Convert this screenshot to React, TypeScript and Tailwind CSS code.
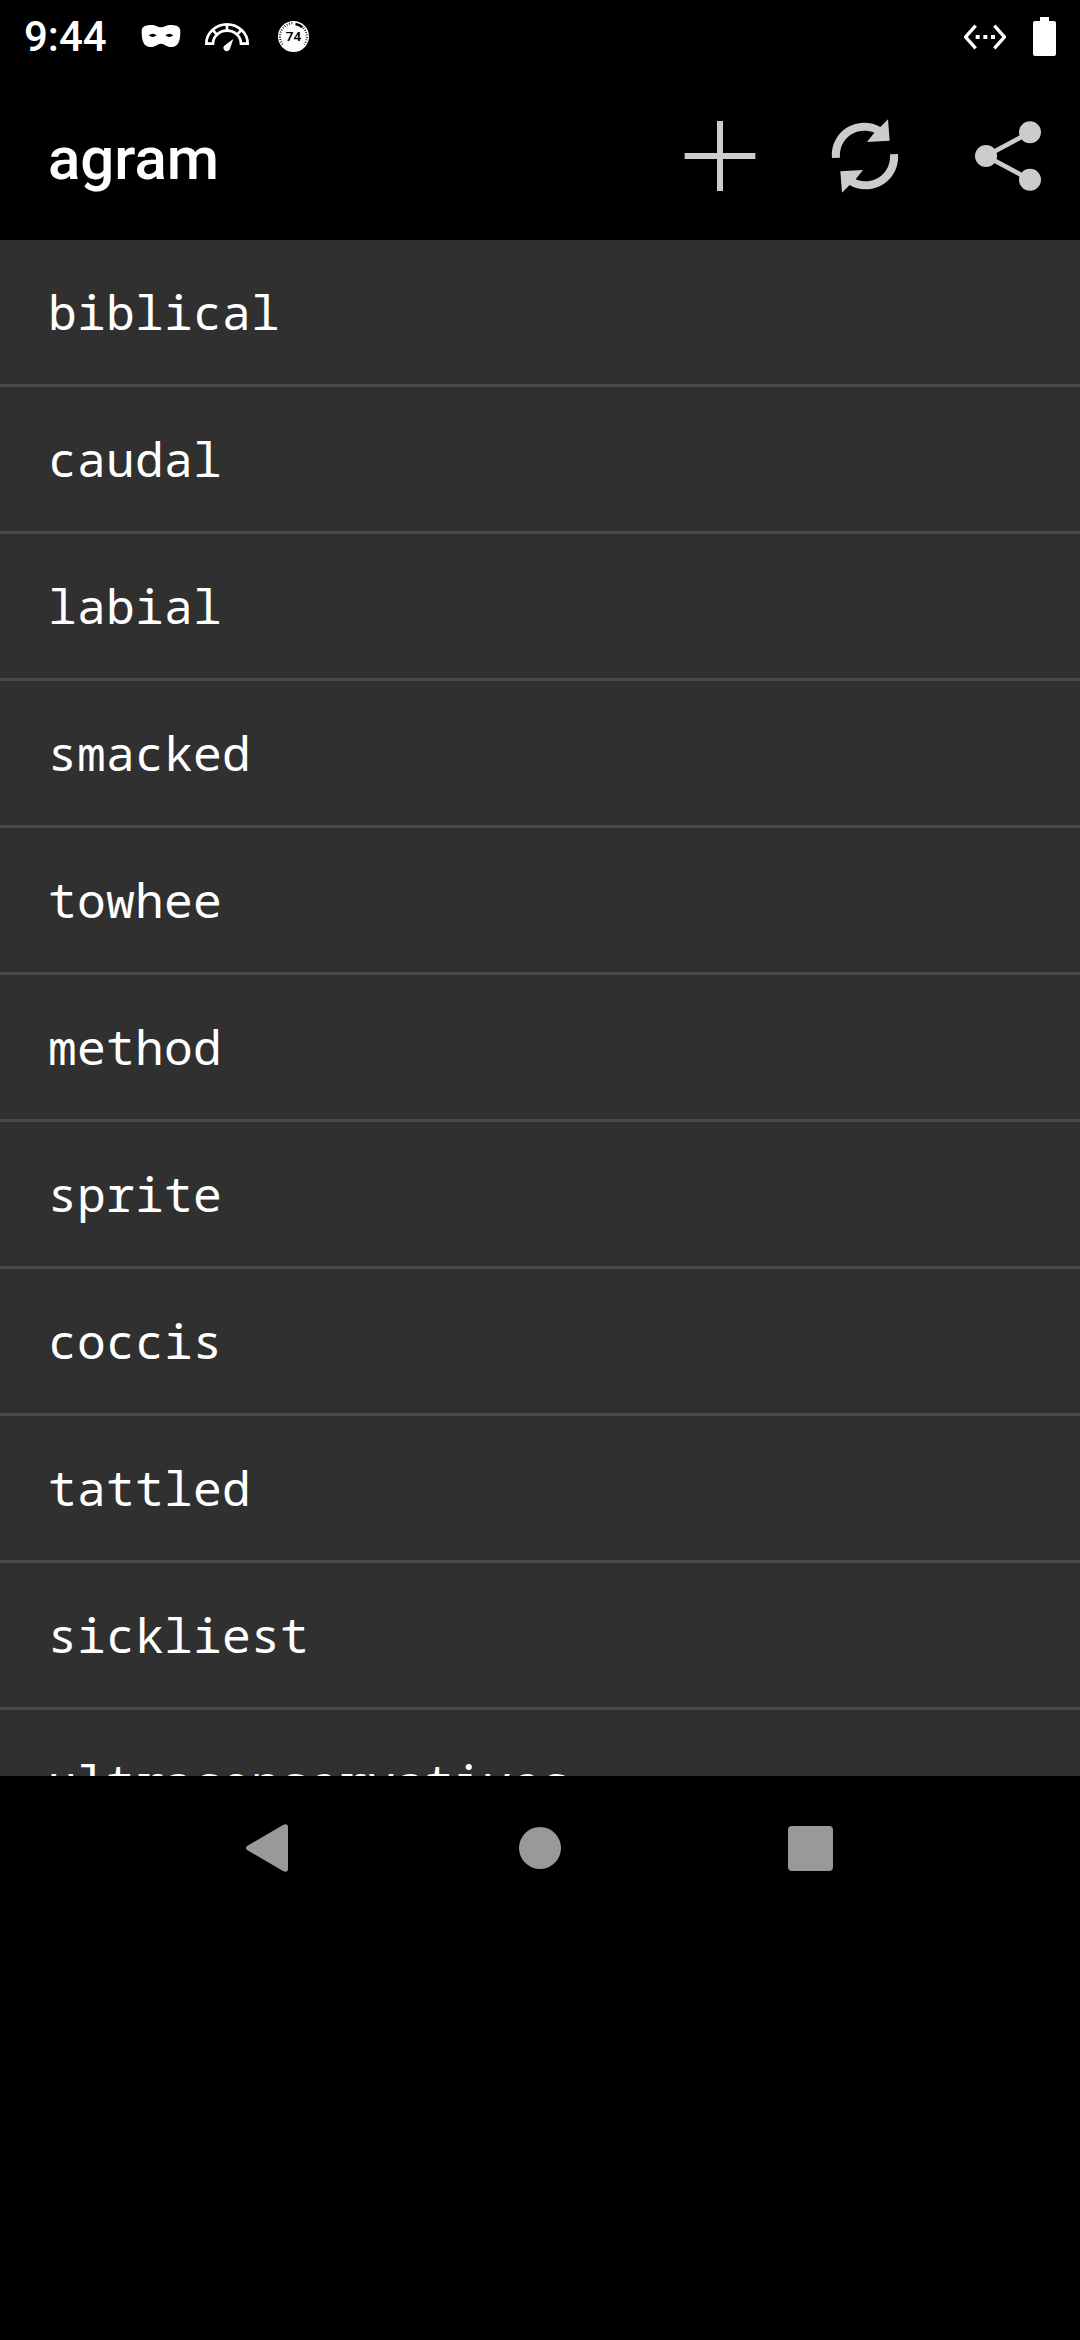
const words = [
  "biblical",
  "caudal",
  "labial",
  "smacked",
  "towhee",
  "method",
  "sprite",
  "coccis",
  "tattled",
  "sickliest",
  "ultraconservatives",
];

function Mask() {
  return (
    <svg className="ml-[32px] h-[24px] w-[42px]" viewBox="0 0 126 72" fill="#fff">
      <path
        fillRule="evenodd"
        d="M34 3C48 3 53 10 63 10S78 3 92 3C112 3 121 9 121 22C121 50 116 69 94 69C78 69 74 59 63 59S48 69 32 69C10 69 5 50 5 22C5 9 14 3 34 3ZM26 34Q38 44 50 34Q38 24 26 34ZM76 34Q88 44 100 34Q88 24 76 34Z"
      />
    </svg>
  );
}

function Gauge() {
  return (
    <svg className="mt-[2px] ml-[22px] h-[30px] w-[46px]" viewBox="0 0 138 90" fill="none" stroke="#fff" strokeWidth="8">
      <path d="M7 65A62 58 0 0 1 131 65H111A42 39 0 0 0 27 65Z" />
      <path d="M69 6V29M26 24L41 40M112 24L97 40" strokeWidth="8" />
      <path d="M88 51L78 80A10 10 0 1 1 60 72Z" fill="#fff" stroke="none" />
    </svg>
  );
}

function Dial() {
  return (
    <svg className="mt-px ml-[28px] h-[31px] w-[31px]" viewBox="0 0 94 94">
      <circle cx="47" cy="47" r="47" fill="#fff" />
      <path d="M14 71A40 40 0 0 1 47 7" fill="none" stroke="#000" strokeWidth="6" strokeDasharray="2.5 5" />
      <path d="M77 21A40 40 0 0 1 80 71" fill="none" stroke="#000" strokeWidth="6" strokeDasharray="2.5 5" />
      <path d="M53 9A38 38 0 0 1 74 19" fill="none" stroke="#000" strokeWidth="8" />
      <text x="47" y="62" textAnchor="middle" fontSize="41" fontWeight="600" fontFamily="Roboto, sans-serif" fill="#000">
        74
      </text>
    </svg>
  );
}

export default function App() {
  return (
    <div className="flex h-[2340px] w-[1080px] flex-col overflow-hidden bg-black font-[Roboto,sans-serif] text-white">
      <header className="flex h-[72px] shrink-0 items-center justify-between pr-[24px] pl-6">
        <div className="flex items-center">
          <span className="w-[84px] pt-[2px] text-[42px] leading-[74px] font-medium">9:44</span>
          <Mask />
          <Gauge />
          <Dial />
        </div>
        <div className="flex items-center">
          <svg className="mt-px h-[26px] w-[42px]" viewBox="0 0 126 78" fill="none" stroke="#fff" strokeWidth="10">
            <path d="M35 5L5 39L35 73M91 5L121 39L91 73" />
            <path d="M35 39H93" strokeWidth="12" strokeDasharray="12 11" />
          </svg>
          <svg className="ml-[27px] h-[39px] w-[23px]" viewBox="0 0 69 117" fill="#fff">
            <path d="M21 0H48V12H63Q69 12 69 18V111Q69 117 63 117H6Q0 117 0 111V18Q0 12 6 12H21Z" />
          </svg>
        </div>
      </header>
      <div className="flex h-[168px] shrink-0 items-center justify-between pl-12">
        <h1 className="pt-[5px] text-[60px] leading-[70px] font-medium">agram</h1>
        <svg className="h-[168px] w-[420px]" viewBox="0 -54 1260 504" fill="#ccc">
          <path d="M171 93H189V189H286V207H189V303H171V207H74V189H171Z" />
          <path d="M516 204C511 143 558 98 613 98Q640 98 661 111L684 88L689 152L621 156L643 128C592 107 536 143 540 203Z" />
          <path
            transform="rotate(180 615 198)"
            d="M516 204C511 143 558 98 613 98Q640 98 661 111L684 88L689 152L621 156L643 128C592 107 536 143 540 203Z"
          />
          <path d="M1110 127L978 198L1110 269" fill="none" stroke="#ccc" strokeWidth="14" />
          <circle cx="978" cy="198" r="33" />
          <circle cx="1110" cy="127" r="33" />
          <circle cx="1110" cy="269" r="33" />
        </svg>
      </div>
      <ul className="h-[1536px] shrink-0 overflow-hidden bg-[#303030]">
        {words.map((word) => (
          <li
            key={word}
            className="flex h-[147px] items-center border-b-[3px] border-[#4a4a4a] pl-12 font-['Droid_Sans_Mono','Noto_Sans_Mono','Liberation_Mono',monospace] text-[48px] leading-[56px] tracking-[0.2px]"
          >
            {word}
          </li>
        ))}
      </ul>
      <nav className="flex h-[144px] shrink-0 items-center justify-center">
        <div className="flex w-[270px] justify-center">
          <svg className="h-[48px] w-[48px]" viewBox="0 0 48 48" fill="#999">
            <path d="M1 22L37 1Q42 -1 42 3V45Q42 49 37 47L1 26Q-1 24 1 22Z" />
          </svg>
        </div>
        <div className="flex w-[270px] justify-center">
          <div className="h-[42px] w-[42px] rounded-full bg-[#999]" />
        </div>
        <div className="flex w-[270px] justify-center">
          <div className="h-[45px] w-[45px] rounded-[4px] bg-[#999]" />
        </div>
      </nav>
    </div>
  );
}
